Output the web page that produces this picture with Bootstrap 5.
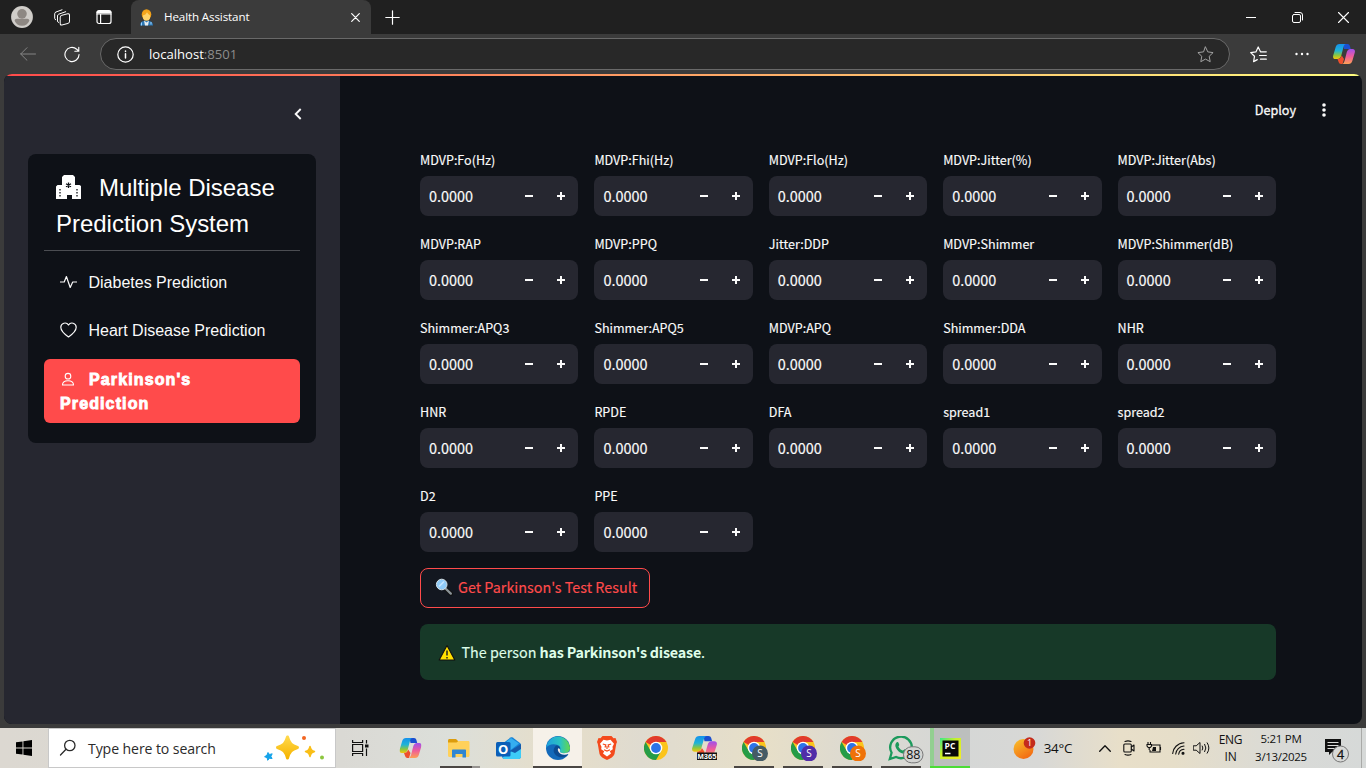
<!DOCTYPE html>
<html lang="en">
<head>
<meta charset="utf-8">
<meta name="viewport" content="width=device-width, initial-scale=1">
<title>Health Assistant</title>
<link href="https://cdn.jsdelivr.net/npm/bootstrap@5.3.0/dist/css/bootstrap.min.css" rel="stylesheet">
<style>
  :root { --app-bg:#0e1117; --side-bg:#262730; --accent:#ff4b4b; --chrome:#3b3b3b; }
  html, body { height:768px; overflow:hidden; }
  body { background:var(--chrome); font-family:"Open Sans","Noto Sans",sans-serif; width:1366px; }
  svg { display:block; flex:none; }
  .ln { fill:none; stroke:currentColor; stroke-linecap:round; stroke-linejoin:round; }

  /* browser window */
  .titlebar { height:34px; background:#202020; color:#fff; }
  .slot { flex:none; display:flex; align-items:center; justify-content:center; }
  .tab-item { width:240px; height:34px; background:var(--chrome); border-radius:8px 8px 0 0; padding:0 8px; font-size:11.6px; letter-spacing:-.12px; }
  .toolbar-row { height:40px; color:#fff; }
  .address { width:1130px; height:32px; margin-left:7px; background:#282828; border:1px solid #696969; border-radius:16px; font-size:13.1px; padding:0 15px 0 16px; }
  .port { color:#8d8d8d; }
  .viewport { margin:0 4px; height:650px; border-radius:8px; overflow:hidden; background:var(--app-bg); color:#fafafa; }
  .topline { height:2px; background:linear-gradient(90deg,#ff4b4b,#fffd80); }

  /* application */
  .app { height:648px; font-family:"Noto Sans CJK JP","Open Sans",sans-serif; }
  .sidebar { width:336px; background:var(--side-bg); padding:28px 24px 0; }
  .menu-box { margin-top:30px; height:289px; background:var(--app-bg); border-radius:8px; padding:16px; font-family:"Liberation Sans",Arial,sans-serif; }
  .menu-title { font-size:24px; line-height:36px; padding:0 12px 8px; letter-spacing:-.02px; border-bottom:1px solid #4b4d52; height:81px; color:#fff; }
  .menu-title svg { display:inline-block; margin-right:18px; vertical-align:-3px; }
  .menu-link { color:#fafafa; padding:8px 16px; font-size:16px; line-height:24px; border-radius:6px; margin-bottom:8px; }
  .menu-link svg { display:inline-block; margin-right:12px; margin-left:-.5px; vertical-align:-2px; }
  .menu-link.active { background:var(--accent); color:#fff; font-weight:700; -webkit-text-stroke:.9px #fff; letter-spacing:1.12px; margin-top:-1px; padding:9px 16px 7px; height:64px; }
  .menu-link.active svg { margin-left:0; margin-right:13px; vertical-align:-1px; }
  .app-header { height:72px; padding:22px 28px 0 0; font-size:12.6px; line-height:24px; -webkit-text-stroke:.3px; }
  .content { padding:0 86px 0 80px; }
  .field-label { height:24px; line-height:24px; font-size:12.57px; margin-bottom:4px; -webkit-text-stroke:.15px; }
  .field { height:40px; background:var(--side-bg); border-radius:8px; padding:0 1px 0 9px; font-size:14.45px; border:0; -webkit-text-stroke:.15px; }
  .field button { width:32px; height:38px; border:0; background:transparent; color:#fafafa; padding:0; }
  .run-btn { width:230px; height:40px; border:1px solid var(--accent); color:var(--accent); border-radius:8px; background:#131720; font-size:14.36px; padding:0 0 2px 14px; line-height:36px; -webkit-text-stroke:.15px; }
  .result { height:56px; background:#173928; color:#dffde9; border-radius:8px; font-size:14.33px; padding:0 18px; -webkit-text-stroke:.15px; }
  .result b { font-weight:700; letter-spacing:-.22px; -webkit-text-stroke:0; }

  /* taskbar */
  .taskbar { margin-top:4px; height:40px; color:#111; background:linear-gradient(90deg,#dcd8d1 0,#dad9d4 25%,#dcdfda 33%,#e6dec9 41%,#dfdbd0 47%,#e7dfc8 56%,#dddad0 62%,#d5d7d6 70%,#d8d8d6 76%,#e8dfc9 82%,#e6dec9 86%,#d9dad7 94%,#d6d9d8 100%); }
  .search { width:288px; height:40px; background:#fff; border:1px solid #c8c8c8; font-size:14.1px; letter-spacing:-.1px; color:#2b2b2b; padding-left:10px; }
  .app-slot { width:49px; height:40px; flex:none; display:flex; align-items:center; justify-content:center; }
  .open { background:linear-gradient(#4a4643,#4a4643) 5px 38px / 40px 2px no-repeat; }
  .tray-text { font-size:12px; line-height:17px; letter-spacing:-.3px; }
</style>
</head>
<body>
<svg width="0" height="0" class="position-absolute">
  <defs>
    <linearGradient id="cpA" x1="0" y1="0" x2="0" y2="1"><stop offset="0" stop-color="#1591ec"/><stop offset=".45" stop-color="#20b4d6"/><stop offset=".75" stop-color="#8cc63f"/><stop offset="1" stop-color="#f5c60c"/></linearGradient>
    <linearGradient id="cpB" x1="0" y1="0" x2="0" y2="1"><stop offset="0" stop-color="#a04fec"/><stop offset=".5" stop-color="#ee5c9a"/><stop offset="1" stop-color="#fda055"/></linearGradient>
    <linearGradient id="edA" x1="0" y1="0" x2="1" y2="0"><stop offset="0" stop-color="#1f9fde"/><stop offset=".6" stop-color="#2bc3c0"/><stop offset="1" stop-color="#66d84a"/></linearGradient>
    <linearGradient id="gold" x1="0" y1="0" x2="0" y2="1"><stop offset="0" stop-color="#ffd84a"/><stop offset="1" stop-color="#f6b400"/></linearGradient>
    <linearGradient id="sun" x1="0" y1="0" x2=".6" y2="1"><stop offset="0" stop-color="#f9c32c"/><stop offset="1" stop-color="#f36c13"/></linearGradient>
    <linearGradient id="pyc" x1="0" y1="0" x2="1" y2="1"><stop offset="0" stop-color="#35e88a"/><stop offset=".4" stop-color="#c8f02c"/><stop offset="1" stop-color="#f3ee22"/></linearGradient>
    <symbol id="copilot" viewBox="0 0 22 20">
      <path d="M10 0h4.500c1.400 0 2 .8 2.400 2l.8 3H11z" fill="#1b4fd0"/>
      <path d="M6.500 0H13c-1.300 0-2 1.200-2.600 3.200L8.300 11.500c-.7 2.300-1.700 3.500-3.600 3.500H2.400C.4 15-.3 13.400.2 11.500L2.700 3C3.300 1 4.500 0 6.500 0z" fill="url(#cpA)"/>
      <path d="M4.500 15c2 0 3.500-1 4.200-3.500L11 15l-1.500 5H8c-1.300 0-2-.8-2.400-2z" fill="#ee4f2d"/>
      <path d="M15.500 20H9c1.300 0 2-1.200 2.600-3.200l2.100-8.300c.7-2.300 1.700-3.500 3.600-3.500h2.300c2 0 2.700 1.600 2.200 3.500L19.300 17c-.6 2-1.800 3-3.800 3z" fill="url(#cpB)"/>
    </symbol>
    <symbol id="chrome" viewBox="0 0 24 24">
      <circle cx="12" cy="12" r="12" fill="#fbc41c"/>
      <path d="M12 12 1.600 6A12 12 0 0 1 22.400 6H12z" fill="#e13b2d"/>
      <path d="M1.600 6A12 12 0 0 0 12 24l5.200-9L12 12 6.800 15z" fill="#259c48"/>
      <circle cx="12" cy="12" r="6.300" fill="#fff"/><circle cx="12" cy="12" r="4.900" fill="#2d73e8"/>
    </symbol>
  </defs>
</svg>

<header class="titlebar d-flex">
  <div class="slot" style="width:44px"><svg width="22" height="22" viewBox="0 0 23 23"><circle cx="11.500" cy="11.500" r="11.400" fill="#d0cdc9"/><circle cx="11.500" cy="8.200" r="5" fill="#8e8883"/><path d="M3.800 15.500c0-1.500 1-2.200 2.200-2.200h11c1.200 0 2.200.7 2.200 2.200-1.300 3.300-4 5.200-7.700 5.200s-6.400-1.900-7.700-5.200z" fill="#8e8883"/></svg></div>
  <div class="slot" style="width:36px"><svg width="17" height="17" viewBox="0 0 17 17" class="ln"><rect x="6.200" y="5" width="9.300" height="9.800" rx="1.800" transform="skewY(-14) translate(0 3.200)"/><path d="M4.500 13.500q-1-.3-1-1.500V7q0-1.300 1.200-1.800l7-2.500M1.700 10.800Q.7 10.500.7 9.300V4.800Q.7 3.500 2 3L8 .8"/></svg></div>
  <div class="slot" style="width:48px"><svg width="16" height="16" viewBox="0 0 16 16" class="ln" stroke-width="1.200"><rect x="1" y="1.500" width="14" height="13" rx="2"/><path d="M1 5h14M4.600 5v9.500"/><path d="M2 3.200h12" stroke-width="2.700"/></svg></div>
  <div class="tab-item d-flex align-items-center" style="margin-left:3px">
    <svg width="15" height="17" viewBox="0 0 15 17"><path d="M1 16.500c0-3.200 2-4.600 4.500-4.800h4c2.500.2 4.500 1.600 4.500 4.800z" fill="#2c78b5"/><path d="m5 11.500 2.500 2 2.500-2-1 5H6z" fill="#e8edf1"/><ellipse cx="7.500" cy="5.500" rx="4.800" ry="5.200" fill="#f0a018"/><ellipse cx="7.500" cy="7.500" rx="3.600" ry="4.300" fill="#ffd36a"/><path d="M3.500 6.500Q7 6 8 3q1 3 3.500 3.500L11 2.500 7 1 4 3z" fill="#f5a51d"/><path d="M2.500 13.500v3M12 13v2.500" stroke="#9fd4ff"/></svg>
    <span style="margin-left:10px">Health Assistant</span>
    <svg class="ln ms-auto" style="margin-right:3px" width="9" height="9" viewBox="0 0 9 9" stroke-width="1.200"><path d="m.7.7 7.600 7.600m0-7.600L.7 8.300"/></svg>
  </div>
  <div class="slot" style="width:43px"><svg class="ln" width="15" height="15" viewBox="0 0 15 15" stroke-width="1.200"><path d="M7.500.8v13.400M.8 7.500h13.400"/></svg></div>
  <div class="d-flex ms-auto">
    <div class="slot" style="width:46px"><svg class="ln" width="10" height="10" viewBox="0 0 10 10"><path d="M0 5.500h10"/></svg></div>
    <div class="slot" style="width:46px"><svg class="ln" width="11" height="11" viewBox="0 0 11 11"><rect x=".5" y="2.500" width="8" height="8" rx="1.500"/><path d="M3 .5h5a2.500 2.500 0 0 1 2.500 2.500v5"/></svg></div>
    <div class="slot" style="width:46px"><svg class="ln" width="11" height="11" viewBox="0 0 11 11" stroke-width="1.100"><path d="m.5.5 10 10m0-10-10 10"/></svg></div>
  </div>
</header>

<div class="toolbar-row d-flex align-items-center">
  <div class="slot" style="width:56px;color:#858585"><svg class="ln" width="16" height="14" viewBox="0 0 16 14"><path d="M15.500 7H.7M7 .7.7 7 7 13.300"/></svg></div>
  <div class="slot" style="width:32px"><svg class="ln" width="16" height="17" viewBox="0 0 17 17" stroke-width="1.200"><path d="M16 8.500a7.500 7.500 0 1 1-2.500-5.600L15.700 5M15.700.8V5h-4.200"/></svg></div>
  <div style="width:5px"></div>
  <div class="address d-flex align-items-center">
    <svg class="ln" width="17" height="17" viewBox="0 0 17 17" stroke-width="1.200"><circle cx="8.500" cy="8.500" r="7.700"/><path d="M8.500 7.700V12M8.500 5v.4" stroke-width="1.500"/></svg>
    <span style="margin-left:15px;padding-top:1px">localhost<span class="port">:8501</span></span>
    <svg class="ln ms-auto" style="color:#a2a2a2" width="17" height="17" viewBox="0 0 17 17"><path d="m8.500 1 2.300 4.900 5.300.7-3.900 3.700 1 5.400-4.700-2.600-4.700 2.600 1-5.400L.9 6.600l5.300-.7z"/></svg>
  </div>
  <div class="slot" style="width:56px"><svg class="ln" width="17" height="17" viewBox="0 0 17 17" stroke-width="1.200"><path d="M10.500 5.800 8.200 1 5.900 5.900.7 6.600l3.800 3.700-.9 5.300 3.700-2M10.500 5.800h5.800M9.500 9.500h6.800M10.500 13.200h5.800"/></svg></div>
  <div class="slot" style="width:32px"><svg width="14" height="4" viewBox="0 0 14 4" fill="#fff"><circle cx="1.500" cy="2" r="1.200"/><circle cx="7" cy="2" r="1.200"/><circle cx="12.500" cy="2" r="1.200"/></svg></div>
  <div class="slot" style="width:48px;padding-left:4px"><svg width="22" height="20"><use href="#copilot"/></svg></div>
</div>

<main class="viewport">
  <div class="topline"></div>
  <div class="app d-flex">
    <aside class="sidebar flex-shrink-0">
      <div class="d-flex justify-content-end" style="height:20px;padding:4px 14px 0 0"><svg class="ln" width="8" height="12" viewBox="0 0 8 12" stroke-width="1.900" style="stroke-linecap:butt;stroke-linejoin:miter"><path d="M6.700 1 1.700 6l5 5"/></svg></div>
      <nav class="menu-box">
        <div class="menu-title"><svg width="25" height="24" viewBox="0 0 25 24"><path fill="#fff" d="M8 0h9l2 2v8h4.500L25 11v13h-9v-4h-5v4H0V11.500L1.500 10H6V2z"/><path fill="none" stroke="#0e1117" stroke-width="1.300" d="M12.500 7.500v5.500M10 8.800l5 2.900M15 8.800l-5 2.900M4 14v1.500M4 17v1.500M4 20v1.500M21 14v1.500M21 17v1.500M21 20v1.500"/><path fill="#0e1117" d="M11 20h3v4h-3z"/></svg>Multiple Disease Prediction System</div>
        <div class="nav flex-column flex-nowrap" style="padding-top:4px;margin-top:8px">
          <a class="menu-link text-decoration-none"><svg class="ln" width="17" height="16" viewBox="0 0 17 16" stroke-width="1.200"><path d="M.5 8h3.700L6.400 2.500l3.800 11L12.700 8h3.800"/></svg>Diabetes Prediction</a>
          <a class="menu-link text-decoration-none"><svg class="ln" width="17" height="16" viewBox="0 0 17 16" stroke-width="1.200"><path d="M8.500 15C3.500 11.500.8 8.700.8 5.300.8 1 6.300-.5 8.500 3 10.700-.5 16.200 1 16.200 5.300c0 3.400-2.700 6.200-7.700 9.700z"/></svg>Heart Disease Prediction</a>
          <a class="menu-link active text-decoration-none" style="margin-top:0"><svg class="ln" width="16" height="14" viewBox="0 0 16 14" stroke-width="1.100"><circle cx="8" cy="4.200" r="2.800"/><path d="M2.500 13c0-3 2.300-4.300 5.500-4.300s5.500 1.300 5.500 4.300z"/></svg>Parkinson's<br>Prediction</a>
        </div>
      </nav>
    </aside>
    <section class="flex-grow-1">
      <div class="app-header d-flex justify-content-end"><span>Deploy</span><svg width="20" height="24" viewBox="0 0 20 24" fill="#fafafa" style="margin-left:18px"><circle cx="10" cy="7" r="1.800"/><circle cx="10" cy="12" r="1.800"/><circle cx="10" cy="17" r="1.800"/></svg></div>
      <div class="content">
        <div class="row row-cols-5 g-3" id="fields"></div>
        <button class="run-btn btn d-flex align-items-center mt-3"><svg width="18" height="18" viewBox="0 0 18 18"><path d="m10.500 10.500 5.500 5.300" stroke="#111" stroke-width="4" stroke-linecap="round"/><path d="m10.500 10.500 5.300 5.100" stroke="#8b9398" stroke-width="2.300" stroke-linecap="round"/><circle cx="6.700" cy="6.500" r="5.300" fill="#8fcaf7" stroke="#d8e2e8" stroke-width="1"/><path d="M4 8.500 9 3.500" stroke="#c7e6ff" stroke-width="1.600"/></svg><span style="margin-left:5px">Get Parkinson's Test Result</span></button>
        <div class="result d-flex align-items-center mt-3"><svg width="18" height="17" viewBox="0 0 18 17"><path d="M9 1.500 16.800 16H1.200z" fill="#ffe000" stroke="#111" stroke-width="1.100" stroke-linejoin="round"/><path d="M9 6.500v5M9 13v1.600" stroke="#222" stroke-width="1.500"/></svg><span style="margin-left:5.500px">The person <b>has Parkinson's disease</b>.</span></div>
      </div>
    </section>
  </div>
</main>

<footer class="taskbar d-flex">
  <div class="slot" style="width:48px"><svg width="16" height="16" viewBox="0 0 16 16"><path d="M0 2.300 6.500 1.400v6.100H0zM7.400 1.200 16 0v7.500H7.400zM0 8.400h6.500v6.200L0 13.700zM7.400 8.400H16V16l-8.600-1.200z"/></svg></div>
  <div class="search d-flex align-items-center">
    <svg class="ln" width="18" height="18" viewBox="0 0 18 18" stroke-width="1.300"><circle cx="10.800" cy="6.500" r="5.200"/><path d="M7 10.300 1.500 16"/></svg>
    <span style="margin-left:11px;padding-top:1px">Type here to search</span>
    <svg class="ms-auto" style="margin-right:10px" width="62" height="28" viewBox="0 0 62 28"><path d="M24.500 3c2 7 4 8.500 10 10.500-6 2-8 3.500-10 10.500-2-7-4-8.500-10-10.500 6-2 8-3.500 10-10.500z" fill="url(#gold)" stroke="url(#gold)" stroke-width="3" stroke-linejoin="round"/><path d="M47 12.500c1 3.500 2 4 4.500 5-2.500 1-3.500 1.500-4.500 5-1-3.500-2-4-4.500-5 2.500-1 3.500-1.500 4.500-5z" fill="#f9be16" stroke="#f9be16" stroke-width="1.500" stroke-linejoin="round"/><path d="m5 18.500 1.500 2 2.700-.7-1.300 2.500 1.200 2.200-2.600-.2-1.800 2-.6-2.600-2.500-1 2.300-1.400z" fill="#14a3ea" stroke="#14a3ea"/><circle cx="41" cy="4" r="2" fill="#f26522"/><circle cx="59" cy="23.600" r="2" fill="#8cc63f"/></svg>
  </div>
  <div class="slot" style="width:48px"><svg width="17" height="16" viewBox="0 0 17 16" fill="none" stroke="#111" stroke-width="1.200"><path d="M.6 0v2.500h10V0M.6 16v-2.500h10V16M.6 4.500h10v7H.6zM14.500 0v3.500M14.500 8.500V16"/><path d="M13 4.500h3.500v3H13z" fill="#111" stroke="none"/></svg></div>
  <div class="app-slot" style="margin-left:2px"><svg width="23" height="20" viewBox="0 0 22 20"><use href="#copilot"/></svg></div>
  <div class="app-slot" style="background:linear-gradient(90deg,#4a4643 32px,#969390 32px) 5px 38px / 40px 2px no-repeat"><svg width="22" height="19" viewBox="0 0 22 19" style="margin-left:-1px"><path d="M0 1.500C0 .6.600 0 1.500 0H8l2 2v3H0z" fill="#dc9c0c"/><path d="M0 3.500h8.500l2-1.500H20c1 0 1.500.5 1.500 1.500v13c0 .8-.5 1.500-1.500 1.500H1.500C.6 18 0 17.300 0 16.500z" fill="#ffd15a"/><path d="M4 11.500c0-.6.400-1 1-1h12c.6 0 1 .4 1 1V18.500h-3.500V15h-7v3.500H4z" fill="#2f86d2"/></svg></div>
  <div class="app-slot"><svg width="25" height="23" viewBox="0 0 25 23"><path d="m6 7 8.500-6.500c.7-.5 1.500-.5 2.200 0L24 6c.5.400 1 1 1 1.700V19c0 2-1 3-3 3H9c-2 0-3-1-3-3z" fill="#1481d6"/><path d="m9 6 6-5 8 5.500-9 7z" fill="#35aef0"/><path d="M25 8v11.500c0 1.500-1 2.500-2.500 2.500H9c-1 0-2-.5-2.500-1.500z" fill="#3dccf8"/><path d="m14 14 11-7v5l-6 4z" fill="#155aab"/><rect y="5" width="14.500" height="14.500" rx="1.500" fill="#0b5fb8"/><text x="7.200" y="17" fill="#fff" font-family="Open Sans" font-size="13" font-weight="700" text-anchor="middle">O</text></svg></div>
  <div class="app-slot" style="background:linear-gradient(#4a4643,#4a4643) 0 38px / 49px 2px no-repeat #f6f1e9"><svg width="24" height="24" viewBox="0 0 24 24"><circle cx="12" cy="12" r="12" fill="#1369ba"/><path d="M.3 10A12 12 0 0 1 24 11.500c0 4-3 5.800-6 5.800-3.500 0-4.300-1.500-4-3 1-1.500.5-4.300-3-5.500C7 7.600 2 8.500.3 12z" fill="url(#edA)"/><path d="M10.500 9.500c-4 2.500-4 8.500 1.500 11 3 1.500 6.500 1 9.500-1.300l.7-.9c-4.200 1.700-7.500.5-8.500-1.800-1-2 .5-2.500.3-4.500-.1-1.500-1.500-2.500-3.500-2.500z" fill="#0c4b91"/><path d="M12.200 12.200c1.300.3 2.200 1.100 1.800 2.300-.5 1.600.8 2.800 4 2.800 2.200 0 4.200-.5 5.300-1.700l.7 2.400h-2c-3.500 1.700-8 .5-9.500-2.300-.7-1.400-.9-2.600-.3-3.500z" fill="#f6f1e9"/></svg></div>
  <div class="app-slot"><svg width="20" height="24" viewBox="0 0 20 24"><path d="M5.500 0h9l2 2.200L18.500 2 20 6l-.8 2L17.500 18c-.7 2.500-4 4.500-7.500 6-3.500-1.500-6.800-3.500-7.500-6L.8 8 0 6l1.500-4 2 .2z" fill="#f44a1c"/><path d="m10 4.500 3.500-.7 3.500 4-1.500 3 .3 2.500-3 2 1.200 2.200L10 20.500l-4-3 1.200-2.200-3-2 .3-2.500L3 7.800l3.500-4z" fill="#fff"/><path d="m5.800 8 3 .8L8 11.500M14.200 8l-3 .8.800 2.700M7 13.700l3 1.300 3-1.300M10 10v3" fill="none" stroke="#f44a1c" stroke-width="1.200"/></svg></div>
  <div class="app-slot"><svg width="24" height="24"><use href="#chrome"/></svg></div>
  <div class="app-slot"><svg width="25" height="24" viewBox="0 0 25 24"><svg width="25" height="21" viewBox="0 0 22 20" preserveAspectRatio="none"><use href="#copilot"/></svg><rect x="5" y="16.500" width="20" height="7.500" fill="#111"/><text x="15" y="22.900" fill="#fff" font-family="Liberation Sans" font-size="7.500" font-weight="700" text-anchor="middle">M365</text></svg></div>
  <div class="app-slot open"><svg width="28" height="26" viewBox="0 0 28 26" style="margin-left:5px"><svg width="24" height="24" y="1"><use href="#chrome"/></svg><circle cx="18" cy="18.500" r="8" fill="#455b65"/><text x="18" y="22" fill="#fff" font-family="Open Sans" font-size="10" text-anchor="middle">S</text></svg></div>
  <div class="app-slot open"><svg width="28" height="26" viewBox="0 0 28 26" style="margin-left:5px"><svg width="24" height="24" y="1"><use href="#chrome"/></svg><circle cx="18" cy="18.500" r="8" fill="#512da8"/><text x="18" y="22" fill="#fff" font-family="Open Sans" font-size="10" text-anchor="middle">S</text></svg></div>
  <div class="app-slot open"><svg width="28" height="26" viewBox="0 0 28 26" style="margin-left:5px"><svg width="24" height="24" y="1"><use href="#chrome"/></svg><circle cx="18" cy="18.500" r="8" fill="#ef7208"/><text x="18" y="22" fill="#fff" font-family="Open Sans" font-size="10" text-anchor="middle">S</text></svg></div>
  <div class="app-slot open"><svg width="36" height="28" viewBox="0 0 36 28" style="margin-left:10px;margin-top:4px"><path d="m1.800 23 1.800-6.300a10.800 10.800 0 1 1 4.500 4.300z" fill="none" stroke="#1c9a5c" stroke-width="2.300"/><path d="M8.500 6.500c.8-.6 1.700-.6 2 .3l.7 1.700c.3.700-.8 1.600-.7 2.200 1 2 2.500 3.200 4.300 3.900.7 0 1.400-1.600 2.200-1.200l2 1c.6.400 0 2.200-1.200 2.900-3 1.400-7.500-1.300-9.500-4.800-1.400-2.200-1.300-4.600.2-6z" fill="#1c9a5c"/><rect x="15.500" y="10.800" width="19.500" height="16" rx="8" fill="#d4d4d2" stroke="#777"/><text x="25.300" y="23.300" fill="#111" font-family="Open Sans" font-size="12.500" text-anchor="middle">88</text></svg></div>
  <div class="app-slot" style="width:40px;margin-left:5px;background:linear-gradient(#4bdc35,#4bdc35) 0 38px / 40px 2px no-repeat,linear-gradient(90deg,#92cf90 4px,#bcbfbd 4px)"><svg width="21" height="21" viewBox="0 0 21 21"><rect width="21" height="21" fill="url(#pyc)"/><rect x="2.500" y="2.500" width="16" height="16" fill="#090909"/><text x="10" y="11" fill="#fff" font-family="Open Sans" font-size="8.500" font-weight="700" text-anchor="middle">PC</text><path d="M5 15.500h5.500" stroke="#fff" stroke-width="1.500"/></svg></div>

  <div class="d-flex ms-auto">
    <div class="slot" style="width:30px"><svg width="24" height="24" viewBox="0 0 24 24"><circle cx="10.500" cy="13" r="10" fill="url(#sun)"/><circle cx="16.500" cy="7" r="5.800" fill="#c42b1c"/><text x="16.500" y="10.300" fill="#fff" font-family="Open Sans" font-size="9" text-anchor="middle">1</text></svg></div>
    <div class="slot" style="width:36px;font-size:13.400px;letter-spacing:-.2px;padding-top:1px">34°C</div>
    <div class="slot" style="width:24px;margin-left:17px"><svg class="ln" width="12" height="7" viewBox="0 0 12 7" stroke-width="1.300"><path d="m.7 6.300 5.300-5.500 5.300 5.500"/></svg></div>
    <div class="slot" style="width:24px"><svg class="ln" width="12" height="16" viewBox="0 0 12 16" stroke-width="1.100"><rect x=".8" y="4" width="7.500" height="8" rx="1"/><path d="m8.300 7 2.700-2v6L8.300 9M2 1.500q3-1.300 6 0M2 14.500q3 1.300 6 0"/></svg></div>
    <div class="slot" style="width:25px"><svg width="16" height="12" viewBox="0 0 16 12" fill="none" stroke="#111" stroke-width="1.100"><path d="M6 3h8v7H4V8M14.500 5v3M2 0v2M4.500 0v2M1 2.500h4.500v1.500L4.300 5.500H2.200L1 4zM3.200 5.500V8"/><path d="M7 5h3v4H6z" fill="#111" stroke="none"/></svg></div>
    <div class="slot" style="width:24px"><svg class="ln" width="13" height="13" viewBox="0 0 13 13" stroke-width="1.100"><path d="M.7 11.500C1 6 5.500 1.200 12 .8M3.700 12C4 7.800 7.500 4.300 12 4M6.700 12.200C7 9.500 9 7.600 12 7.300"/><circle cx="11" cy="11.300" r="1" fill="currentColor"/></svg></div>
    <div class="slot" style="width:23px"><svg class="ln" width="17" height="14" viewBox="0 0 17 14"><path d="M.6 4.800h2.600L7 1.500v11L3.200 9.200H.6zM9.300 5q1.300 2 0 4M11.700 3.300q2.500 3.700 0 7.400M14.200 1.800q3.500 5.200 0 10.400"/></svg></div>
    <div class="slot tray-text text-center" style="width:36px;padding-right:1px">ENG<br>IN</div>
    <div class="slot tray-text text-center" style="width:65px;font-size:11.500px;padding-right:1px;line-height:18px;padding-bottom:1px">5:21 PM<br>3/13/2025</div>
    <div class="slot" style="width:47px"><svg width="25" height="25" viewBox="0 0 25 25" style="margin-left:0;margin-top:5px"><path d="M0 1h16v13H7l-3 3v-3H0z" fill="#111"/><path d="M2.500 4.500h11M2.500 7.500h11M2.500 10.500h7" stroke="#dcdcda"/><circle cx="15.500" cy="16" r="8" fill="#d8d9d7" stroke="#777"/><text x="15.500" y="20.500" fill="#111" stroke="#111" stroke-width=".3" font-family="Open Sans" font-size="12.500" text-anchor="middle">4</text></svg></div>
    <div style="width:5px;border-left:1px solid #a9aaa8"></div>
  </div>
</footer>

<script src="https://cdn.jsdelivr.net/npm/bootstrap@5.3.0/dist/js/bootstrap.bundle.min.js"></script>
<script>
  const names = ["MDVP:Fo(Hz)","MDVP:Fhi(Hz)","MDVP:Flo(Hz)","MDVP:Jitter(%)","MDVP:Jitter(Abs)",
    "MDVP:RAP","MDVP:PPQ","Jitter:DDP","MDVP:Shimmer","MDVP:Shimmer(dB)",
    "Shimmer:APQ3","Shimmer:APQ5","MDVP:APQ","Shimmer:DDA","NHR",
    "HNR","RPDE","DFA","spread1","spread2","D2","PPE"];
  document.getElementById("fields").innerHTML = names.map(n => `
    <div class="col">
      <div class="field-label">${n}</div>
      <div class="field d-flex align-items-center">
        <span class="me-auto">0.0000</span>
        <button class="slot" aria-label="Decrease"><svg width="8" height="8"><path d="M0 4h8" stroke="currentColor" stroke-width="2"/></svg></button>
        <button class="slot" aria-label="Increase"><svg width="8" height="8"><path d="M0 4h8M4 0v8" stroke="currentColor" stroke-width="2"/></svg></button>
      </div>
    </div>`).join("");
</script>
</body>
</html>
